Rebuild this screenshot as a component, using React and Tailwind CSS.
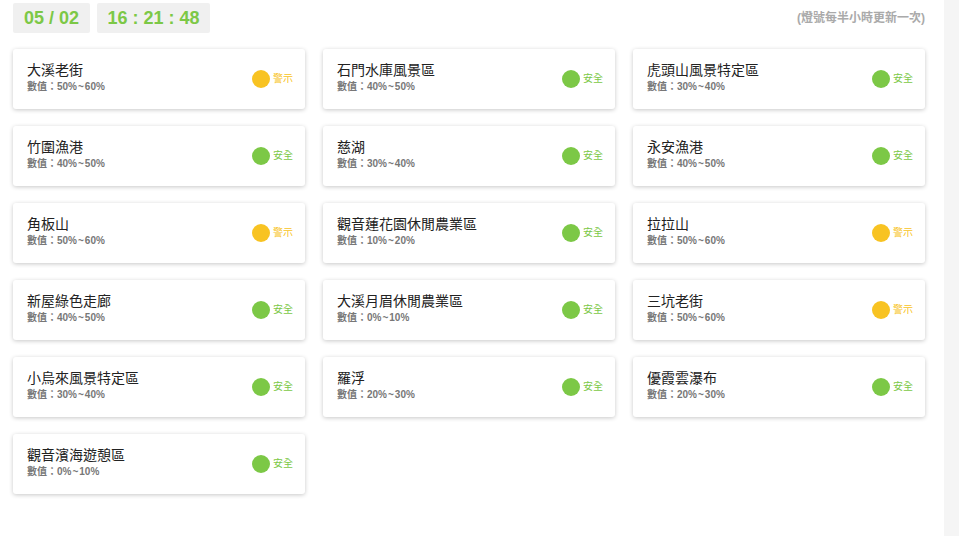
import React from "react";

const items = [
  ["大溪老街", "50%", "60%", "warn"],
  ["石門水庫風景區", "40%", "50%", "safe"],
  ["虎頭山風景特定區", "30%", "40%", "safe"],
  ["竹圍漁港", "40%", "50%", "safe"],
  ["慈湖", "30%", "40%", "safe"],
  ["永安漁港", "40%", "50%", "safe"],
  ["角板山", "50%", "60%", "warn"],
  ["觀音蓮花園休閒農業區", "10%", "20%", "safe"],
  ["拉拉山", "50%", "60%", "warn"],
  ["新屋綠色走廊", "40%", "50%", "safe"],
  ["大溪月眉休閒農業區", "0%", "10%", "safe"],
  ["三坑老街", "50%", "60%", "warn"],
  ["小烏來風景特定區", "30%", "40%", "safe"],
  ["羅浮", "20%", "30%", "safe"],
  ["優霞雲瀑布", "20%", "30%", "safe"],
  ["觀音濱海遊憩區", "0%", "10%", "safe"],
];

function Card({ name, lo, hi, status }) {
  const warn = status === "warn";
  return (
    <div className="h-[60px] bg-white rounded-[3px] shadow-[0_1px_4px_rgba(0,0,0,0.22)] flex items-center justify-between pl-[14px] pr-[12px]">
      <div className="flex flex-col mt-[-3px]">
        <div className="text-[14px] leading-[18px] text-[#222]">{name}</div>
        <div className="text-[10px] leading-[14px] mt-[1px] font-bold text-[#777]">
          數值：{lo}<span className="mx-[1px]">~</span>{hi}
        </div>
      </div>
      <div className="flex items-center gap-[3px]">
        <div className={"w-[18px] h-[18px] rounded-full " + (warn ? "bg-[#f8c322]" : "bg-[#7cc846]")} />
        <div className={"text-[10px] leading-[12px] " + (warn ? "text-[#f8c322]" : "text-[#7cc846]")}>
          {warn ? "警示" : "安全"}
        </div>
      </div>
    </div>
  );
}

export default function App() {
  return (
    <div
      className="w-[959px] h-[536px] flex bg-white overflow-hidden"
      style={{ fontFamily: '"Liberation Sans", "Noto Sans CJK TC", sans-serif' }}
    >
      <div className="w-[944px] pl-[13px] pr-[19px] pt-[3px]">
        <div className="flex items-center h-[30px]">
          <div className="flex gap-[7px]">
            <div className="w-[77px] h-[30px] bg-[#f0f0f0] rounded-[2px] flex items-center justify-center text-[18px] font-bold text-[#7cc846]">
              05 / 02
            </div>
            <div className="w-[113px] h-[30px] bg-[#f0f0f0] rounded-[2px] flex items-center justify-center text-[18px] font-bold text-[#7cc846]">
              16 : 21 : 48
            </div>
          </div>
          <div className="ml-auto text-[12px] font-bold text-[#aaa] mt-[-1px]">(燈號每半小時更新一次)</div>
        </div>
        <div className="grid grid-cols-3 gap-x-[18px] gap-y-[17px] mt-[16px]">
          {items.map(([n, lo, hi, s]) => (
            <Card key={n} name={n} lo={lo} hi={hi} status={s} />
          ))}
        </div>
      </div>
      <div className="flex-1 bg-[#f5f5f5]" />
    </div>
  );
}
